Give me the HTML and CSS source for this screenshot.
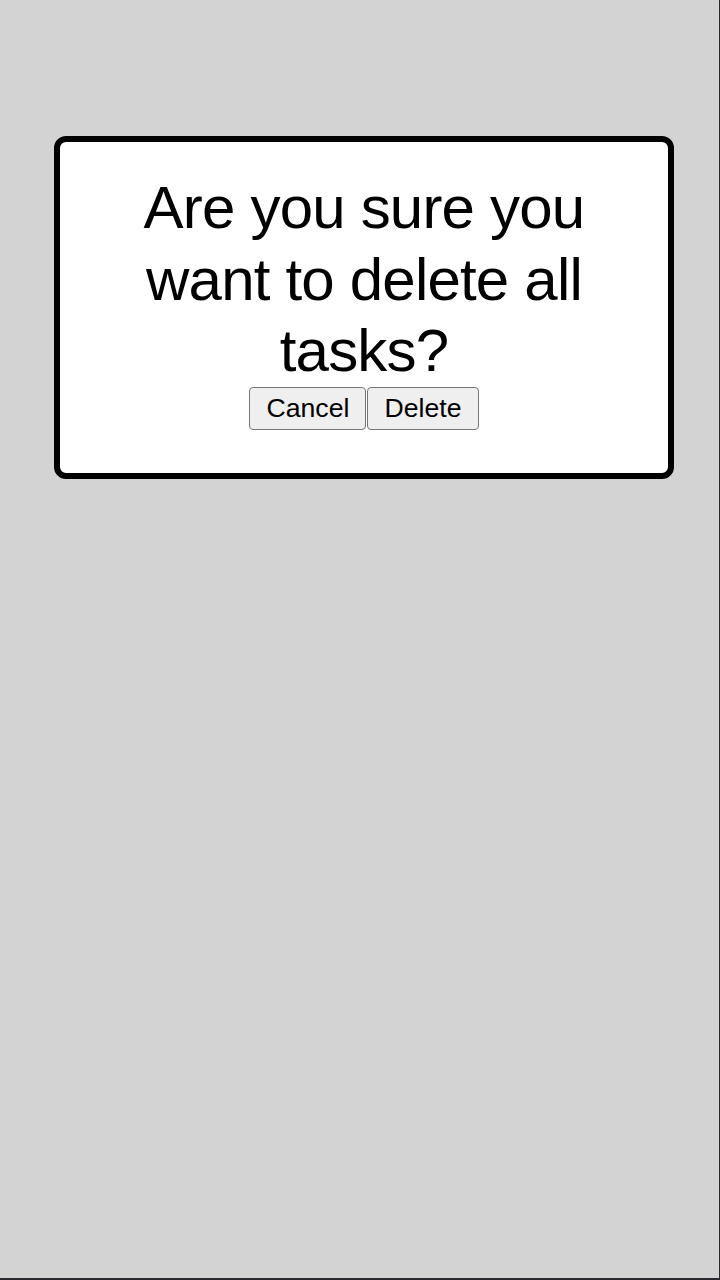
FILE: index.html
```html
<!DOCTYPE html>
<html lang="en">
<head>
<meta charset="utf-8">
<title>Delete all tasks</title>
<link rel="stylesheet" href="styles.css">
</head>
<body>
<div class="screen">
  <div class="dialog">
    <h1 class="dialog-title">Are you sure you want to delete all tasks?</h1>
    <div class="dialog-actions">
      <button class="btn" type="button">Cancel</button>
      <button class="btn" type="button">Delete</button>
    </div>
  </div>
</div>
</body>
</html>
```

FILE: styles.css
```css
html {
  background: #2a2a2e;
}
body {
  margin: 0;
}
.screen {
  width: 719px;
  height: 1278px;
  background: #d3d3d3;
  padding-top: 136px;
  box-sizing: border-box;
}
.dialog {
  margin-left: 54px;
  width: 620px;
  height: 343px;
  box-sizing: border-box;
  background: #ffffff;
  border: 6px solid #000000;
  border-radius: 12px;
  padding: 30px 20px 0;
  display: flex;
  flex-direction: column;
  align-items: center;
}
.dialog-title {
  margin: 0;
  font-family: "Liberation Sans", Arial, sans-serif;
  font-weight: 400;
  font-size: 60px;
  line-height: 71.5px;
  letter-spacing: -0.8px;
  text-align: center;
  color: #000000;
}
.dialog-actions {
  display: flex;
  gap: 1px;
}
.btn {
  font-family: "Liberation Sans", Arial, sans-serif;
  font-size: 26.67px;
  line-height: 31px;
  padding: 5px 16px;
  background: #efefef;
  color: #000000;
  border: 1px solid #767676;
  border-radius: 4px;
}
```
